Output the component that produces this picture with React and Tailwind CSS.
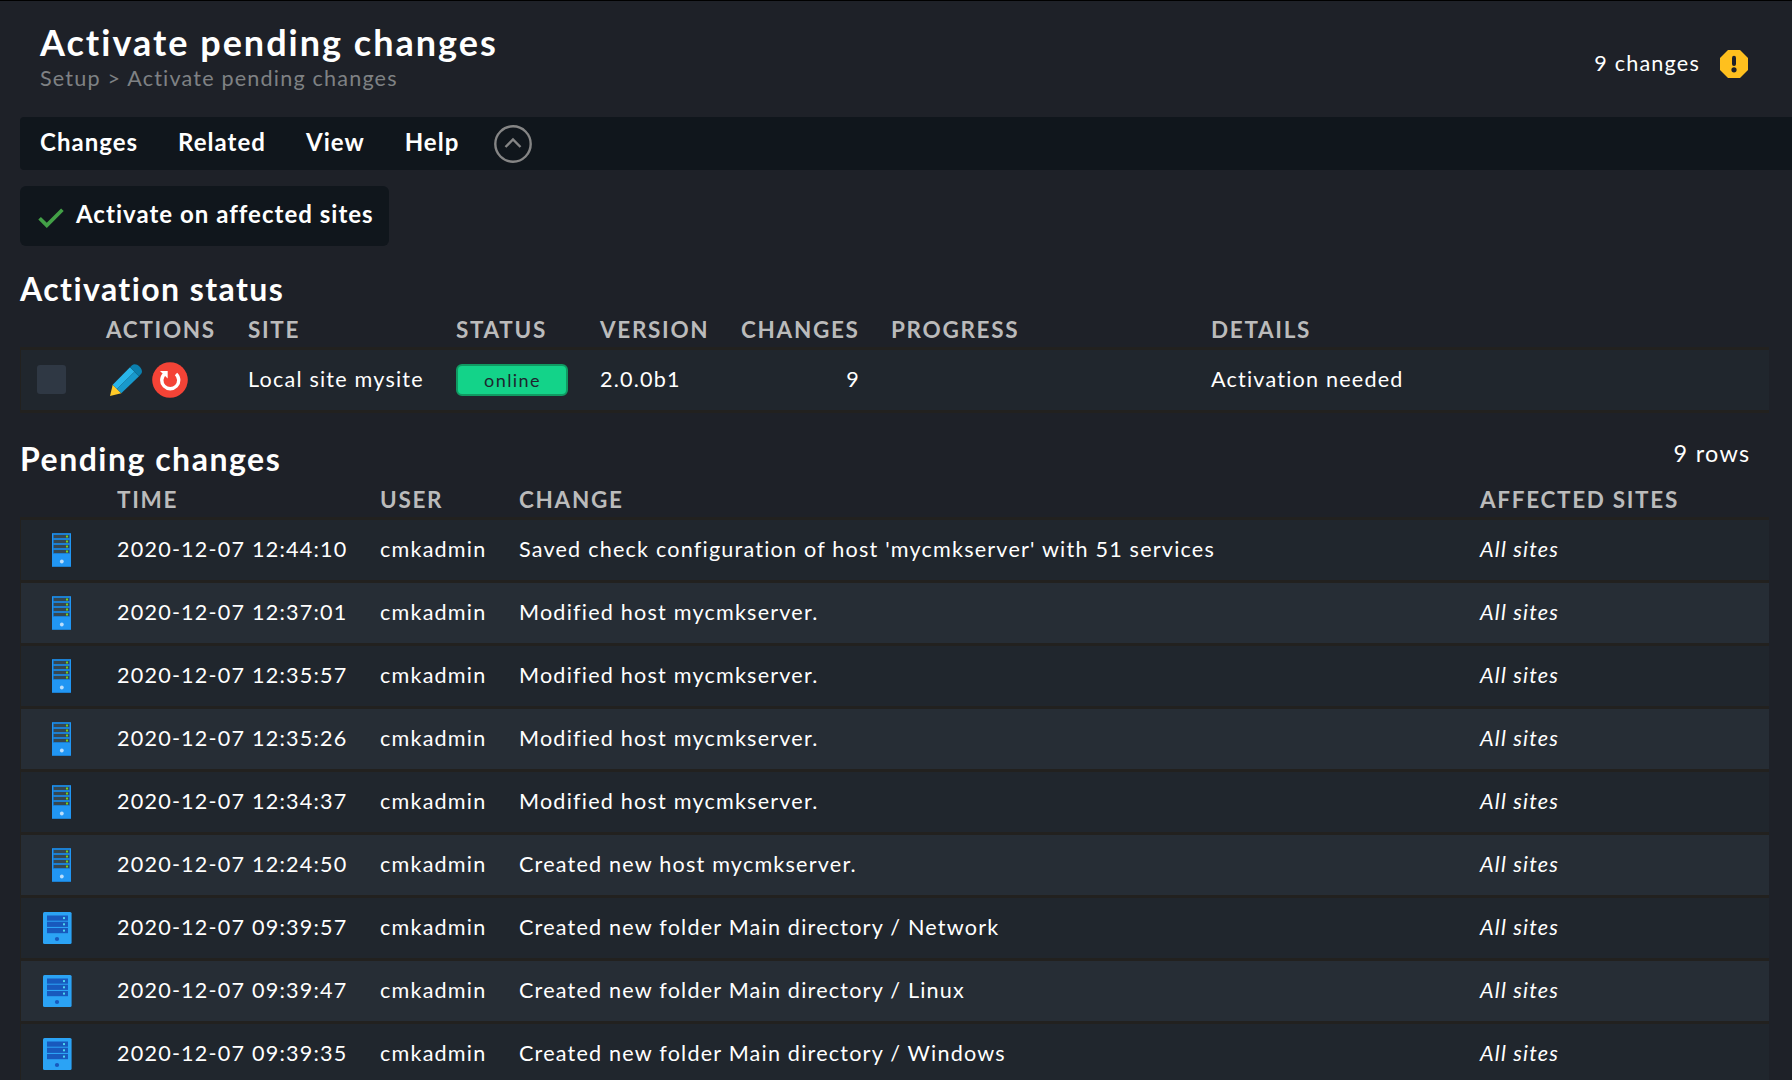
import React from "react";

const changes = [
  ["host", "2020-12-07 12:44:10", "Saved check configuration of host 'mycmkserver' with 51 services"],
  ["host", "2020-12-07 12:37:01", "Modified host mycmkserver."],
  ["host", "2020-12-07 12:35:57", "Modified host mycmkserver."],
  ["host", "2020-12-07 12:35:26", "Modified host mycmkserver."],
  ["host", "2020-12-07 12:34:37", "Modified host mycmkserver."],
  ["host", "2020-12-07 12:24:50", "Created new host mycmkserver."],
  ["folder", "2020-12-07 09:39:57", "Created new folder Main directory / Network"],
  ["folder", "2020-12-07 09:39:47", "Created new folder Main directory / Linux"],
  ["folder", "2020-12-07 09:39:35", "Created new folder Main directory / Windows"],
];

const statusGrid =
  "grid grid-cols-[85px_142px_208px_144px_141px_150px_320px_1fr] items-center";
const changesGrid = "grid grid-cols-[96px_263px_139px_961px_1fr] items-center";
const headText =
  "h-[48px] pt-[14px] pl-px text-[22.5px] leading-none font-bold uppercase tracking-[1.68px] text-[#bbbbbb]";

function WarningIcon() {
  return (
    <svg className="size-7" viewBox="0 0 28 28">
      <path d="M8 0h12l8 8v12l-8 8H8l-8-8V8z" fill="#ffc01e" />
      <path d="M14 7.8v6.2" stroke="#1e2128" strokeWidth="4" strokeLinecap="round" />
      <circle cx="14" cy="19.8" r="2.6" fill="#1e2128" />
    </svg>
  );
}

function CollapseIcon() {
  return (
    <svg className="size-[38px]" viewBox="0 0 38 38" fill="none" stroke="#858585">
      <circle cx="19" cy="19" r="17.7" strokeWidth="2.4" />
      <path d="M11.5 22 19 14.5l7.5 7.5" strokeWidth="2.4" />
    </svg>
  );
}

function CheckIcon() {
  return (
    <svg className="h-5 w-[26px]" viewBox="0 0 26 20" fill="none">
      <path d="M1.6 10.2 8.8 17.4 24.4 1.8" stroke="#43a047" strokeWidth="3.7" />
    </svg>
  );
}

function PencilIcon() {
  return (
    <svg className="h-8 w-8" viewBox="0 0 32 32">
      <path d="M0 32 2.7 20.8 11.3 29.2z" fill="#ffca28" />
      <path d="M2.7 20.8 20 3.2l4.5 4.5L7 25z" fill="#29b6ea" />
      <path d="M7 25 24.5 7.7l4.5 4.6L11.3 29.2z" fill="#1899cc" />
      <path d="M20 3.2 22 1.3C24-.5 27 0 29.5 2.4s3.3 5.6 1.5 7.6l-2 2.3z" fill="#0b7fae" />
    </svg>
  );
}

function RestartIcon() {
  return (
    <svg className="size-9" viewBox="0 0 36 36">
      <circle cx="18" cy="18" r="17.8" fill="#f44336" />
      <path d="M12.5 12A8.5 8.5 0 1 0 24 12" fill="none" stroke="#fff" strokeWidth="3.4" />
      <path d="M8 9h7.7v7.5z" fill="#fff" />
    </svg>
  );
}

function HostIcon() {
  return (
    <svg className="ml-[31px] h-[34px] w-[19px]" viewBox="0 0 19 34">
      <path d="M0 0h19v34H0z" fill="#2196f3" />
      <path d="M0 0h19v1H0zM0 33h19v1H0z" fill="#1c7fd0" />
      {[1.5, 6.5, 11.5, 16.5].map((y) => (
        <g key={y}>
          <rect x="1" y={y} width="17" height="4" fill="#1b69b0" />
          <rect x="2" y={y + 0.5} width="15" height="3" fill="#37474f" />
          <rect x="14" y={y + 1} width="2" height="2" fill="#76d21e" />
        </g>
      ))}
      <circle cx="9.8" cy="28.5" r="1.9" fill="#bbdefb" />
    </svg>
  );
}

function FolderIcon() {
  return (
    <svg className="ml-[22px] h-8 w-[29px]" viewBox="0 0 29 32">
      <rect width="28.6" height="32" rx="1.5" fill="#2ba3f5" />
      {[3.5, 9.7, 16].map((y) => (
        <g key={y}>
          <rect x="4" y={y} width="21" height="5.2" fill="#1859bd" />
          <rect x="20" y={y + 1.6} width="2" height="2" fill="#4dd8ee" />
        </g>
      ))}
      <circle cx="14" cy="27" r="2.1" fill="#1859bd" />
    </svg>
  );
}

export default function App() {
  return (
    <div className="flex h-[1080px] w-[1792px] flex-col overflow-hidden border-t border-black bg-[#1e2128] pl-5 font-['Lato',sans-serif] text-[21.6px] leading-none tracking-[1.2px] whitespace-nowrap text-white [font-variant-ligatures:none]">
      <header className="flex h-[116px] shrink-0 items-start justify-between pr-11 pl-5">
        <div className="pt-[23px]">
          <h1 className="text-[36px] leading-[36px] font-bold tracking-[2px]">Activate pending changes</h1>
          <nav className="mt-[7px] leading-[22px] tracking-[1.18px] text-[#7f8184]">Setup &gt; Activate pending changes</nav>
        </div>
        <div className="flex items-center gap-5 pt-[49px]">
          <span>9 changes</span>
          <WarningIcon />
        </div>
      </header>

      <nav className="flex h-[53px] shrink-0 items-center gap-10 rounded-l bg-[#10161c] pl-5 text-[24px] font-bold tracking-[1.02px]">
        <span className="-mt-[3px]">Changes</span>
        <span className="-mt-[3px]">Related</span>
        <span className="-mt-[3px]">View</span>
        <span className="-mt-[3px]">Help</span>
        <button className="-ml-[5px]"><CollapseIcon /></button>
      </nav>

      <button className="mt-4 flex h-[60px] w-[369px] shrink-0 items-center gap-3 rounded-md bg-[#10161c] pl-[18px] text-[24px] font-bold tracking-[1.02px]">
        <span className="mt-1"><CheckIcon /></span>
        <span className="-mt-1">Activate on affected sites</span>
      </button>

      <section className="mt-[27px] mr-[23px] shrink-0">
        <h2 className="h-[26px] text-[32px] leading-[32px] font-bold tracking-[1.43px]">Activation status</h2>
        <div className={`${statusGrid} ${headText}`}>
          <span />
          <span>Actions</span>
          <span>Site</span>
          <span>Status</span>
          <span>Version</span>
          <span>Changes</span>
          <span>Progress</span>
          <span>Details</span>
        </div>
        <div className="border-y-3 border-l border-[#22211f]">
          <div className={`${statusGrid} h-[60px] bg-[#20262d]`}>
            <span className="mb-px ml-4 size-[29px] rounded-[3px] bg-[#2f3844]" />
            <span className="flex items-center gap-[10px] pl-1">
              <PencilIcon />
              <RestartIcon />
            </span>
            <span>Local site mysite</span>
            <span className="flex h-8 w-[112px] items-center justify-center rounded-md border-2 border-[#109a62] bg-[#13d389] pl-px text-[18px] tracking-[1.4px] text-[#1e262e]">
              online
            </span>
            <span>2.0.0b1</span>
            <span className="w-[119px] text-right">9</span>
            <span />
            <span>Activation needed</span>
          </div>
        </div>
      </section>

      <section className="mt-[30px] mr-[23px] shrink-0">
        <div className="flex h-[26px] items-start justify-between pr-[18.5px]">
          <h2 className="text-[32px] leading-[32px] font-bold tracking-[1.5px]">Pending changes</h2>
          <span className="-mt-px text-[23.4px] tracking-[1.3px]">9 rows</span>
        </div>
        <div className={`${changesGrid} ${headText}`}>
          <span />
          <span>Time</span>
          <span>User</span>
          <span>Change</span>
          <span>Affected sites</span>
        </div>
        <div className="flex flex-col gap-[3px] border-t-3 border-l border-[#22211f] bg-[#22211f]">
          {changes.map(([kind, time, text], i) => (
            <div key={time} className={`${changesGrid} h-[60px] ${i % 2 ? "bg-[#262d35]" : "bg-[#20262d]"}`}>
              {kind === "host" ? <HostIcon /> : <FolderIcon />}
              <span>{time}</span>
              <span>cmkadmin</span>
              <span>{text}</span>
              <span className="italic">All sites</span>
            </div>
          ))}
        </div>
      </section>
    </div>
  );
}
